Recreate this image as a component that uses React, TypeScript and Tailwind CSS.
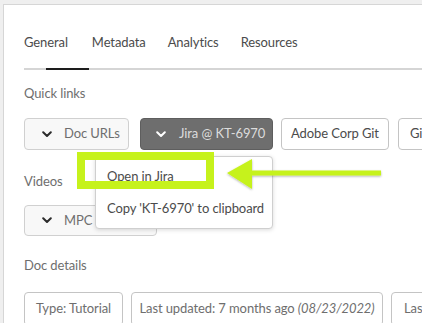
import React from "react";

const Chevron = ({ color }: { color: string }) => (
  <svg width="10" height="7" viewBox="0 0 10 7" className="shrink-0">
    <path d="M1.2 1.2 L5 5 L8.8 1.2" fill="none" stroke={color} strokeWidth="2" strokeLinecap="round" strokeLinejoin="round" />
  </svg>
);

export default function App() {
  return (
    <div
      className="w-[422px] h-[323px] overflow-hidden bg-[#efefef] pt-[4px] pl-[3px]"
      style={{ fontFamily: "Lato, 'Noto Sans', sans-serif" }}
    >
      <div className="relative h-full bg-white border-l border-t border-[#d6d6d6] pl-[20px] text-[13px] tracking-[-0.1px] text-[#4b4b4b]">
        {/* Tabs */}
        <div className="relative pt-[26px]">
          <div className="flex items-center h-[24px] text-[#4b4b4b]">
            <span className="mr-[24px]">General</span>
            <span className="mr-[22px]">Metadata</span>
            <span className="mr-[22px]">Analytics</span>
            <span>Resources</span>
          </div>
          <div className="mt-[13px] h-[2px] bg-[#d5d5d5]" />
          <div className="absolute left-[22px] bottom-0 w-[43px] h-[2px] bg-[#1d1d1d]" />
        </div>

        {/* Quick links */}
        <div className="mt-[15px] h-[18px] flex items-center text-[#6e6e6e]">Quick links</div>
        <div className="mt-[15px] flex items-center whitespace-nowrap">
          <div className="h-[32px] w-[105px] shrink-0 flex items-center rounded-[4px] border border-[#d0d0d0] bg-[#f8f8f8] pl-[17px] text-[#6e6e6e]">
            <Chevron color="#2c2c2c" />
            <span className="ml-[12px]">Doc URLs</span>
          </div>
          <div className="ml-[11px] h-[32px] w-[133px] shrink-0 flex items-center rounded-[4px] border border-[#5e5e5e] bg-[#6e6e6e] pl-[15px] text-[#dcdcdc]">
            <Chevron color="#ffffff" />
            <span className="ml-[13px]">Jira @ KT-6970</span>
          </div>
          <div className="ml-[8px] h-[32px] w-[108px] shrink-0 flex items-center justify-center rounded-[4px] border border-[#c4c4c4] bg-white text-[#4b4b4b]">
            Adobe Corp Git
          </div>
          <div className="ml-[9px] h-[32px] w-[80px] shrink-0 flex items-center rounded-[4px] border border-[#c4c4c4] bg-white pl-[11px] text-[#4b4b4b]">
            Git
          </div>
        </div>

        {/* Videos */}
        <div className="mt-[23px] h-[18px] flex items-center text-[#6e6e6e]">Videos</div>
        <div className="mt-[14px] h-[31px] w-[133px] flex items-center rounded-[4px] border border-[#d0d0d0] bg-[#f8f8f8] pl-[17px] text-[#6e6e6e] whitespace-nowrap overflow-hidden">
          <Chevron color="#2c2c2c" />
          <span className="ml-[12px]">MPC (Adobe)</span>
        </div>

        {/* Doc details */}
        <div className="mt-[21px] h-[18px] flex items-center text-[#6e6e6e]">Doc details</div>
        <div className="mt-[17px] flex items-start whitespace-nowrap">
          <div className="h-[34px] w-[99px] shrink-0 flex items-center justify-center rounded-[4px] border border-[#c4c4c4] text-[#6e6e6e]">
            Type: Tutorial
          </div>
          <div className="ml-[8px] h-[34px] w-[252px] shrink-0 flex items-center justify-center rounded-[4px] border border-[#c4c4c4] text-[#6e6e6e]">
            Last updated: 7 months ago&nbsp;<i>(08/23/2022)</i>
          </div>
          <div className="ml-[8px] h-[34px] w-[80px] shrink-0 flex items-center rounded-[4px] border border-[#c4c4c4] pl-[12px] text-[#6e6e6e]">
            Last
          </div>
        </div>

        {/* Dropdown menu */}
        <div className="absolute left-[91px] top-[151px] w-[178px] h-[73px] rounded-[4px] border border-[#cfcfcf] bg-white pt-[4px] shadow-[0_1px_4px_rgba(0,0,0,0.15)] text-[#4b4b4b] whitespace-nowrap">
          <div className="h-[32px] flex items-center pl-[11px]">Open in Jira</div>
          <div className="h-[32px] flex items-center pl-[11px]">Copy 'KT-6970' to clipboard</div>
        </div>

        {/* Highlight box */}
        <div className="absolute left-[73px] top-[147px] w-[137px] h-[37px] border-[8px] border-[#c6f21c]" />

        {/* Arrow */}
        <svg className="absolute left-[218px] top-[149px]" width="170" height="40" viewBox="0 0 170 40">
          <defs>
            <filter id="sh" x="-10%" y="-30%" width="120%" height="160%">
              <feDropShadow dx="0" dy="1" stdDeviation="0.8" floodColor="#000" floodOpacity="0.3" />
            </filter>
          </defs>
          <g filter="url(#sh)">
            <polygon points="5,19 30,5 30,35" fill="#c6f21c" />
            <rect x="28" y="16.5" width="131" height="5" fill="#c6f21c" />
          </g>
        </svg>
      </div>
    </div>
  );
}
